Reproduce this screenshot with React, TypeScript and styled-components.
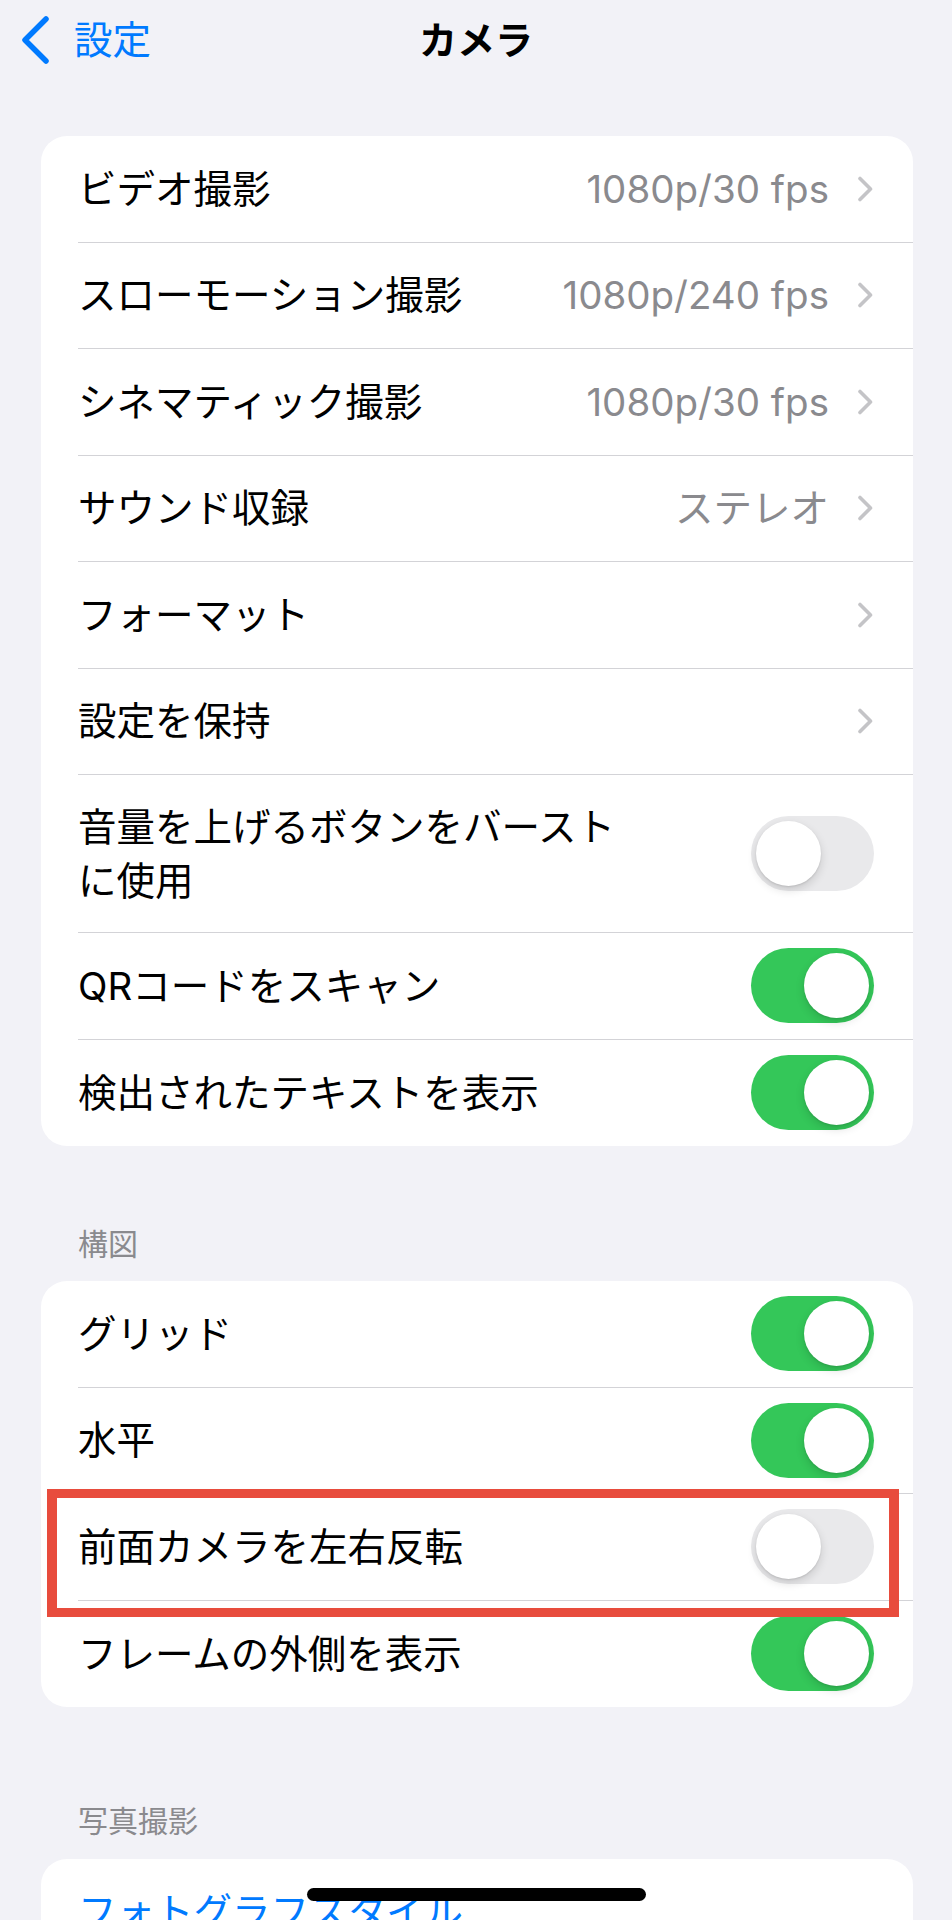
import React from "react";
import styled, { createGlobalStyle } from "styled-components";

const GlobalStyle = createGlobalStyle`
  html, body {
    margin: 0;
    padding: 0;
    background: #f2f2f7;
  }
  body {
    font-family: "Inter", "Noto Sans CJK JP", sans-serif;
    -webkit-font-smoothing: antialiased;
  }
`;

const Screen = styled.div`
  position: relative;
  width: 952px;
  height: 1920px;
  overflow: hidden;
  background: #f2f2f7;
`;

const NavBar = styled.div`
  display: grid;
  grid-template-columns: 1fr auto 1fr;
  align-items: center;
  height: 80px;
`;

const BackButton = styled.div`
  display: flex;
  align-items: center;
  gap: 24px;
  padding-left: 20px;
  color: #007aff;
  font-size: 38.5px;
  line-height: 48px;
`;

const Title = styled.div`
  font-size: 38px;
  font-weight: 700;
  color: #000;
  line-height: 48px;
`;

const Card = styled.div<{ $top: number }>`
  position: relative;
  margin: ${(p) => p.$top}px 39px 0 41px;
  background: #fff;
  border-radius: 26px;
`;

const Row = styled.div`
  padding-left: 37px;
`;

const RowBody = styled.div<{ $last?: boolean }>`
  display: flex;
  align-items: center;
  justify-content: space-between;
  box-sizing: border-box;
  min-height: 106.5px;
  padding-right: 39px;
  border-bottom: ${(p) => (p.$last ? "none" : "1px solid #d3d3d7")};
`;

const Label = styled.div<{ $link?: boolean }>`
  padding: 24.5px 0;
  font-size: 38.5px;
  line-height: 54px;
  color: ${(p) => (p.$link ? "#007aff" : "#000")};
`;

const Trailing = styled.div`
  display: flex;
  align-items: center;
  gap: 28px;
`;

const Value = styled.span`
  font-size: 38.5px;
  line-height: 54px;
  color: #8a8a8e;
`;

const Track = styled.div<{ $on: boolean }>`
  display: flex;
  justify-content: ${(p) => (p.$on ? "flex-end" : "flex-start")};
  align-items: center;
  box-sizing: border-box;
  width: 123px;
  height: 75px;
  padding: 5px;
  border-radius: 38px;
  background: ${(p) => (p.$on ? "#34c759" : "#e9e9eb")};
`;

const Knob = styled.div`
  width: 65px;
  height: 65px;
  border-radius: 50%;
  background: #fff;
  box-shadow: 0 4px 10px rgba(0, 0, 0, 0.14), 0 1px 2px rgba(0, 0, 0, 0.1);
`;

const SectionHeader = styled.div<{ $top: number; $bottom: number }>`
  margin: ${(p) => p.$top}px 40px ${(p) => p.$bottom}px 78px;
  font-size: 30px;
  line-height: 36px;
  color: #8a8a8e;
`;

const Highlight = styled.div`
  position: absolute;
  top: 208px;
  left: 6px;
  width: 852px;
  height: 128px;
  box-sizing: border-box;
  border: 9px solid #e84c3d;
  border-left-width: 10px;
  border-right-width: 10px;
  pointer-events: none;
`;

const HomeIndicator = styled.div`
  position: absolute;
  left: 307px;
  bottom: 19px;
  width: 339px;
  height: 13px;
  border-radius: 7px;
  background: #000;
`;

const BackChevron = () => (
  <svg width="30" height="48" viewBox="0 0 30 48">
    <path
      d="M26 3 L5 24 L26 45"
      fill="none"
      stroke="#007aff"
      strokeWidth="5.5"
      strokeLinecap="round"
      strokeLinejoin="round"
    />
  </svg>
);

const Chevron = () => (
  <svg width="17" height="26" viewBox="0 0 17 26">
    <path
      d="M3 2.5 L13.5 13 L3 23.5"
      fill="none"
      stroke="#c4c4c7"
      strokeWidth="3.6"
      strokeLinecap="round"
      strokeLinejoin="round"
    />
  </svg>
);

const Toggle = ({ on }: { on: boolean }) => (
  <Track $on={on}>
    <Knob />
  </Track>
);

interface Item {
  label: React.ReactNode;
  value?: string;
  chevron?: boolean;
  toggle?: boolean;
  link?: boolean;
}

const SettingsRow = ({ item, last }: { item: Item; last?: boolean }) => (
  <Row>
    <RowBody $last={last}>
      <Label $link={item.link}>{item.label}</Label>
      <Trailing>
        {item.value && <Value>{item.value}</Value>}
        {item.chevron && <Chevron />}
        {item.toggle !== undefined && <Toggle on={item.toggle} />}
      </Trailing>
    </RowBody>
  </Row>
);

const cameraItems: Item[] = [
  { label: "ビデオ撮影", value: "1080p/30 fps", chevron: true },
  { label: "スローモーション撮影", value: "1080p/240 fps", chevron: true },
  { label: "シネマティック撮影", value: "1080p/30 fps", chevron: true },
  { label: "サウンド収録", value: "ステレオ", chevron: true },
  { label: "フォーマット", chevron: true },
  { label: "設定を保持", chevron: true },
  {
    label: (
      <>
        音量を上げるボタンをバースト
        <br />
        に使用
      </>
    ),
    toggle: false,
  },
  { label: "QRコードをスキャン", toggle: true },
  { label: "検出されたテキストを表示", toggle: true },
];

const compositionItems: Item[] = [
  { label: "グリッド", toggle: true },
  { label: "水平", toggle: true },
  { label: "前面カメラを左右反転", toggle: false },
  { label: "フレームの外側を表示", toggle: true },
];

const photoItems: Item[] = [
  { label: "フォトグラフスタイル", link: true },
  { label: "写真撮影の優先", chevron: true },
];

export default function App() {
  return (
    <Screen>
      <GlobalStyle />
      <NavBar>
        <BackButton>
          <BackChevron />
          <span>設定</span>
        </BackButton>
        <Title>カメラ</Title>
        <div />
      </NavBar>

      <Card $top={56}>
        {cameraItems.map((item, i) => (
          <SettingsRow key={i} item={item} last={i === cameraItems.length - 1} />
        ))}
      </Card>

      <SectionHeader $top={80} $bottom={19}>
        構図
      </SectionHeader>
      <Card $top={0}>
        {compositionItems.map((item, i) => (
          <SettingsRow
            key={i}
            item={item}
            last={i === compositionItems.length - 1}
          />
        ))}
        <Highlight />
      </Card>

      <SectionHeader $top={96} $bottom={20}>
        写真撮影
      </SectionHeader>
      <Card $top={0}>
        {photoItems.map((item, i) => (
          <SettingsRow key={i} item={item} last={i === photoItems.length - 1} />
        ))}
      </Card>

      <HomeIndicator />
    </Screen>
  );
}
